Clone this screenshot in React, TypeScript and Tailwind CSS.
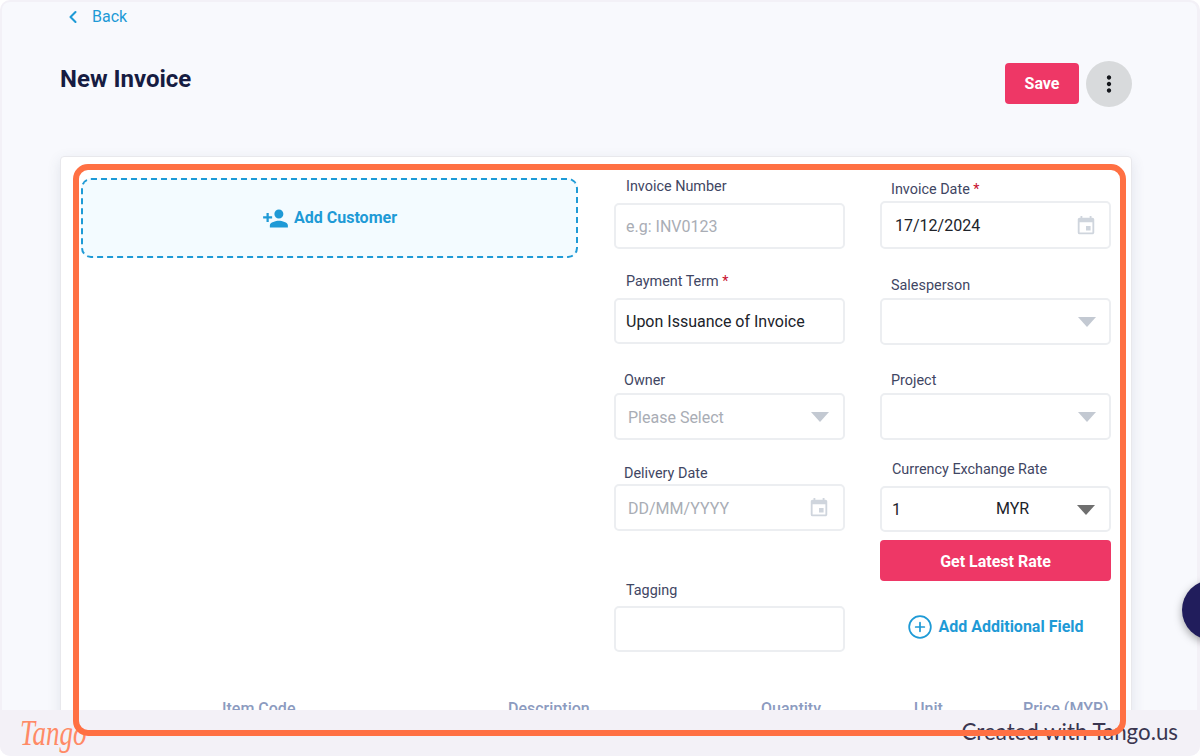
import React from 'react';
import { ChevronLeft, CirclePlus } from 'lucide-react';
import { MdEvent, MdMoreVert, MdPersonAdd } from 'react-icons/md';

type FieldProps = {
  label: string;
  required?: boolean;
  className?: string;
  labelClass: string;
  boxClass: string;
  children?: React.ReactNode;
};

// 下拉箭头
const Caret: React.FC<{ className?: string }> = ({ className }) => (
  <svg width="18" height="10" viewBox="0 0 18 10" className={className}>
    <path d="M0 0h18l-9 10z" fill="currentColor" />
  </svg>
);

const Field: React.FC<FieldProps> = ({ label, required, className, labelClass, boxClass, children }) => (
  <div className={className}>
    <div className={`h-5 pt-px text-[14.4px] leading-5 text-[#3f4663] ${labelClass}`}>
      {label}
      {required && <span className="text-[#c8102e]"> *</span>}
    </div>
    <div className={`flex items-center justify-between rounded-[5px] border-2 border-[#eceef1] bg-white pt-px text-base ${boxClass}`}>
      {children}
    </div>
  </div>
);

export default function App() {
  return (
    <div className="relative h-[756px] w-[1200px] overflow-hidden rounded-[10px] bg-[#f3f1f7] font-['Roboto',sans-serif]">
      <div className="ml-[2px] mt-[2px] h-[754px] w-[1195px] rounded-t-[8px] bg-[#f8f9fd] pl-[58px] pr-[65px]">
        {/* 返回 */}
        <div className="flex h-[30px] items-center pl-[3px] text-base text-[#1e9ad6]">
          <ChevronLeft size={20} strokeWidth={2.5} />
          <span className="ml-[9px]">Back</span>
        </div>

        {/* 标题栏 */}
        <div className="mt-[29px] flex items-start justify-between">
          <h1 className="mt-[2px] text-2xl font-bold leading-8 text-[#161c42]">New Invoice</h1>
          <div className="flex items-start gap-[7px]">
            <button className="mt-[2px] h-[41px] w-[74px] rounded-[4px] bg-[#ee3766] pt-px text-base font-bold text-white">
              Save
            </button>
            <button className="flex h-[46px] w-[46px] items-center justify-center rounded-full bg-[#d8dadc] text-[#15171c]">
              <MdMoreVert size={26} />
            </button>
          </div>
        </div>

        {/* 表单卡片 */}
        <div className="mt-[49px] h-[620px] rounded-[4px] border border-[#e8e8ec] bg-white pt-[19px] shadow-[0_4px_14px_rgba(60,70,110,0.12)]">
          <div className="flex pl-[20px]">
            <div className="w-[497px]">
              <div className="mt-[2px] flex h-[80px] items-center justify-center gap-[5px] rounded-[10px] border-2 border-dashed border-[#1e9ad6] bg-[#f3fbff] text-base font-bold text-[#1e9ad6]">
                <MdPersonAdd size={27} />
                <span>Add Customer</span>
              </div>
            </div>

            <div className="ml-[36px] w-[231px]">
              <Field label="Invoice Number" labelClass="ml-[12px] mb-[7px]" boxClass="h-[46px] px-[10px] text-[#a9adb5]">
                e.g: INV0123
              </Field>
              <Field label="Payment Term" required className="mt-[22px]" labelClass="ml-[12px] mb-[7px]" boxClass="h-[46px] px-[10px] text-[#20232a]">
                Upon Issuance of Invoice
              </Field>
              <Field label="Owner" className="mt-[26px]" labelClass="ml-[10px] mb-[3px]" boxClass="h-[47px] pl-[12px] pr-[14px] text-[#a9adb5]">
                <span className="mt-px">Please Select</span>
                <Caret className="text-[#c3c9d2]" />
              </Field>
              <Field label="Delivery Date" className="mt-[23px]" labelClass="ml-[10px] mb-[1px]" boxClass="h-[47px] pl-[12px] pr-[13px] text-[#a9adb5]">
                <span className="mt-px">DD/MM/YYYY</span>
                <MdEvent size={22} className="text-[#cfd5dd]" />
              </Field>
              <Field label="Tagging" className="mt-[49px]" labelClass="ml-[12px] mb-[6px]" boxClass="h-[46px]" />
            </div>

            <div className="ml-[35px] w-[231px]">
              <Field label="Invoice Date" required className="mt-[3px]" labelClass="ml-[11px] mb-[2px]" boxClass="h-[48px] pl-[13px] pr-[12px] text-[#20232a]">
                <span>17/12/2024</span>
                <MdEvent size={22} className="text-[#cfd5dd]" />
              </Field>
              <Field label="Salesperson" className="mt-[26px]" labelClass="ml-[11px] mb-[3px]" boxClass="h-[47px] pr-[13px]">
                <span />
                <Caret className="text-[#c3c9d2]" />
              </Field>
              <Field label="Project" className="mt-[25px]" labelClass="ml-[11px] mb-[3px]" boxClass="h-[47px] pr-[13px]">
                <span />
                <Caret className="text-[#c3c9d2]" />
              </Field>
              <Field label="Currency Exchange Rate" className="mt-[19px]" labelClass="ml-[12px] mb-[7px]" boxClass="h-[46px] pl-[10px] pr-[14px] text-[#20232a]">
                <span className="mt-px">1</span>
                <span className="ml-[47px] mt-[-2px]">MYR</span>
                <Caret className="text-[#6f6f6f]" />
              </Field>
              <button className="mt-[8px] h-[41px] w-full rounded-[4px] bg-[#ee3766] pt-[2px] text-base font-bold text-white">
                Get Latest Rate
              </button>
              <div className="mt-[34px] flex h-[24px] items-center justify-center gap-[5px] text-base font-bold text-[#1e9ad6]">
                <CirclePlus size={26} strokeWidth={1.6} />
                <span>Add Additional Field</span>
              </div>
            </div>
          </div>

          {/* 明细表头 */}
          <div className="mt-[47px] flex pl-[161px] text-base font-medium leading-5 text-[#8c9bc0]">
            <div className="w-[286px]">Item Code</div>
            <div className="w-[253px]">Description</div>
            <div className="w-[153px]">Quantity</div>
            <div className="w-[109px]">Unit</div>
            <div>Price (MYR)</div>
          </div>
        </div>
      </div>

      {/* 悬浮按钮 */}
      <div className="absolute left-[1182px] top-[580px] h-[60px] w-[60px] rounded-full bg-[#211d5c] shadow-[0_3px_8px_rgba(0,0,0,0.35)]" />

      {/* 页脚水印 */}
      <div className="absolute bottom-0 left-0 flex h-[46px] w-[1200px] items-center justify-between rounded-b-[10px] bg-[#f3f1f7] pl-[20px] pr-[22px]">
        <span className="origin-left scale-y-[1.3] font-['Liberation_Serif',serif] text-[27px] italic leading-none text-[#ff8a66]">Tango</span>
        <span className="mb-[2px] font-['Lato',sans-serif] text-[22.3px] text-[#3a3650]">Created with Tango.us</span>
      </div>

      {/* 高亮框 */}
      <div className="absolute left-[73px] top-[164px] h-[572px] w-[1053px] rounded-[15px] border-[6px] border-[#ff7043]" />
    </div>
  );
}
